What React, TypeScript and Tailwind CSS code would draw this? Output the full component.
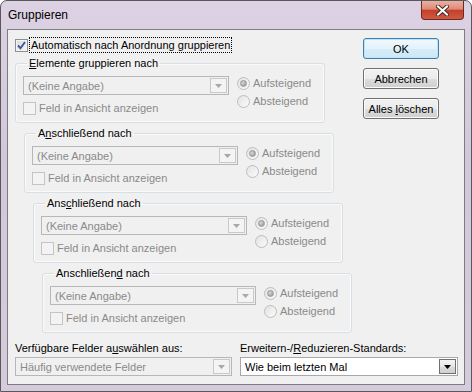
import React from 'react'

const GROUPS = [
  { title: <><u>E</u>lemente gruppieren nach</>, indent: 'ml-0' },
  { title: <>A<u>n</u>schließend nach</>, indent: 'ml-[9px]' },
  { title: <>Ans<u>c</u>hließend nach</>, indent: 'ml-[18px]' },
  { title: <>Anschließen<u>d</u> nach</>, indent: 'ml-[27px]' },
]

function CheckBox({ checked, disabled }: { checked?: boolean; disabled?: boolean }) {
  return (
    <span
      className={`flex h-[13px] w-[13px] shrink-0 items-center justify-center border ${
        disabled
          ? 'border-[#c4c4c4] bg-[#f3f3f3]'
          : 'border-[#8e8f8f] bg-[linear-gradient(135deg,#d8d8d8,#f7f7f7)] shadow-[inset_0_0_0_1px_#f4f4f4]'
      }`}
    >
      {checked && (
        <svg width="9" height="9" viewBox="0 0 9 9">
          <path d="M1 4.5 L3.5 7.2 L8 1" fill="none" stroke="#3c58a0" strokeWidth="1.9" />
        </svg>
      )}
    </span>
  )
}

function Radio({ checked }: { checked?: boolean }) {
  return (
    <span className="flex h-[13px] w-[13px] shrink-0 items-center justify-center rounded-full border border-[#bdbdbd] bg-[linear-gradient(135deg,#e2e2e2,#fbfbfb)]">
      {checked && (
        <span className="h-[7px] w-[7px] rounded-full border border-[#9a9a9a] bg-[radial-gradient(circle_at_35%_35%,#d8d8d8,#8f8f8f)]" />
      )}
    </span>
  )
}

function Combo({ text, enabled, width }: { text: string; enabled?: boolean; width: string }) {
  return (
    <div
      className={`flex h-[19px] items-center border ${width} ${
        enabled ? 'border-[#a9a9a9] bg-white text-black' : 'border-[#b7b7b7] bg-[#f0f0f0] text-[#8a8a8a]'
      }`}
    >
      <span className="flex-1 truncate pl-[4px] leading-[14px]">{text}</span>
      <span
        className={`mr-[1px] flex h-[15px] w-[17px] items-center justify-center border ${
          enabled
            ? 'border-[#707070] bg-[linear-gradient(#f4f4f4,#e6e6e6_50%,#dadada_51%,#d0d0d0)]'
            : 'border-[#c9c9c9] bg-[#f4f4f4]'
        }`}
      >
        <svg width="7" height="4" viewBox="0 0 7 4">
          <path d="M0 0 H7 L3.5 4 Z" fill={enabled ? '#000' : '#a8a8a8'} />
        </svg>
      </span>
    </div>
  )
}

function DlgButton({ children, primary }: { children: React.ReactNode; primary?: boolean }) {
  return (
    <button
      className={`h-[21px] w-[76px] rounded-[3px] border leading-[14px] text-black ${
        primary
          ? 'border-[#3c7fb1] bg-[linear-gradient(#f1f9fe,#e3f2fb_50%,#d6ecf8_51%,#cfe8f6)] shadow-[inset_0_0_0_1px_#bfe4f7]'
          : 'border-[#707070] bg-[linear-gradient(#f2f2f2,#ebebeb_50%,#dddddd_51%,#cfcfcf)] shadow-[inset_0_0_0_1px_#fbfbfb]'
      }`}
    >
      {children}
    </button>
  )
}

export default function App() {
  return (
    <div className="flex h-[392px] w-[472px] flex-col overflow-hidden rounded-t-[7px] border border-[#585858] bg-[linear-gradient(180deg,#dcd2e3,#d3c8db_40%,#d6cbdd)] font-['Liberation_Sans',Arial,sans-serif] text-[11px] text-black">
      {/* Title bar */}
      <div className="flex h-[28px] shrink-0 items-start justify-between">
        <span className="pl-[7px] pt-[7px] text-[12px] leading-[15px]">Gruppieren</span>
        <div className="mr-[7px] flex h-[19px] w-[43px] items-center justify-center rounded-b-[4px] border border-t-0 border-[#6d2a20] bg-[linear-gradient(#eab0a2,#de8a76_45%,#c5402a_52%,#cf5a43)]">
          <svg width="13" height="11" viewBox="0 0 13 11">
            <path d="M2 1.5 L11 9.5 M11 1.5 L2 9.5" stroke="#4a2a26" strokeWidth="4" strokeLinecap="square" />
            <path d="M2 1.5 L11 9.5 M11 1.5 L2 9.5" stroke="#ffffff" strokeWidth="2" strokeLinecap="square" />
          </svg>
        </div>
      </div>

      {/* Client area */}
      <div className="mx-[6px] mb-[6px] flex flex-1 flex-col border border-[#7d7d7d] bg-[#f0f0f0]">
        <div className="flex">
          {/* Left column */}
          <div className="flex flex-col pl-[7px] pt-[7px]">
            <div className="flex h-[16px] items-center">
              <CheckBox checked />
              <span className="ml-[1px] border border-dotted border-black px-[1px] leading-[14px]">
                Automatisch nach Anordnung gruppieren
              </span>
            </div>

            {GROUPS.map((g, i) => (
              <fieldset
                key={i}
                className={`mt-[3px] w-[310px] rounded-[3px] border border-[#d5dfe5] px-[7px] pb-[7px] pt-[6px] shadow-[inset_0_0_0_1px_#fafafa] ${g.indent}`}
              >
                <legend className="ml-[4px] px-[2px] leading-[14px]">{g.title}</legend>
                <div className="flex">
                  <div className="flex flex-col">
                    <Combo text="(Keine Angabe)" width="w-[206px]" />
                    <div className="mt-[6px] flex items-center text-[#8a8a8a]">
                      <CheckBox disabled />
                      <span className="ml-[3px] leading-[14px]">Feld in Ansicht anzeigen</span>
                    </div>
                  </div>
                  <div className="ml-[8px] flex flex-col gap-[4px] text-[#8a8a8a]">
                    <div className="flex h-[14px] items-center">
                      <Radio checked />
                      <span className="ml-[3px]">Aufsteigend</span>
                    </div>
                    <div className="flex h-[14px] items-center">
                      <Radio />
                      <span className="ml-[3px]">Absteigend</span>
                    </div>
                  </div>
                </div>
              </fieldset>
            ))}
          </div>

          {/* Buttons */}
          <div className="ml-auto mr-[25px] flex flex-col gap-[9px] pt-[8px]">
            <DlgButton primary>OK</DlgButton>
            <DlgButton>Abbrechen</DlgButton>
            <DlgButton>
              Alles <u>l</u>öschen
            </DlgButton>
          </div>
        </div>

        {/* Bottom row */}
        <div className="mt-[8px] grid grid-cols-[217px_218px] gap-x-[8px] pl-[7px]">
          <div className="flex flex-col">
            <span className="leading-[14px]">
              Verfügbare Felder a<u>u</u>swählen aus:
            </span>
            <div className="mt-[2px]">
              <Combo text="Häufig verwendete Felder" width="w-[217px]" />
            </div>
          </div>
          <div className="flex flex-col">
            <span className="leading-[14px]">
              Erweitern-/<u>R</u>eduzieren-Standards:
            </span>
            <div className="mt-[2px]">
              <Combo text="Wie beim letzten Mal" enabled width="w-[218px]" />
            </div>
          </div>
        </div>
      </div>
    </div>
  )
}
